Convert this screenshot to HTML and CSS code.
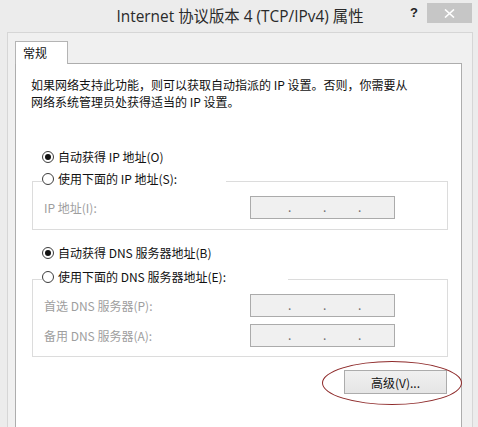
FILE: index.html
```html
<!DOCTYPE html>
<html lang="zh-CN">
<head>
<meta charset="utf-8">
<title>Internet 协议版本 4 (TCP/IPv4) 属性</title>
<link rel="stylesheet" href="styles.css">
</head>
<body>
<div class="window">
  <header class="titlebar">
    <span class="spacer"></span>
    <h1 class="title">Internet 协议版本 4 (TCP/IPv4) 属性</h1>
    <div class="controls">
      <span class="help">?</span>
      <span class="close"><svg width="11" height="9" viewBox="0 0 11 9"><path d="M1 0.5 L10 8.5 M10 0.5 L1 8.5" stroke="#fff" stroke-width="1.6" fill="none"/></svg></span>
    </div>
  </header>
  <div class="client">
    <div class="tabs"><div class="tab">常规</div></div>
    <div class="panel">
      <p class="intro">如果网络支持此功能，则可以获取自动指派的 IP 设置。否则，你需要从<br>网络系统管理员处获得适当的 IP 设置。</p>

      <div class="radio r-first"><span class="dot on"></span>自动获得 IP 地址(O)</div>
      <fieldset class="group g-ip">
        <legend class="legend lg-ip"><span class="radio"><span class="dot"></span>使用下面的 IP 地址(S):</span></legend>
        <div class="row first-row"><span class="lbl">IP 地址(I):</span><span class="ipbox"><i>.</i><i>.</i><i>.</i></span></div>
      </fieldset>

      <div class="radio r-dns"><span class="dot on"></span>自动获得 DNS 服务器地址(B)</div>
      <fieldset class="group g-dns">
        <legend class="legend lg-dns"><span class="radio"><span class="dot"></span>使用下面的 DNS 服务器地址(E):</span></legend>
        <div class="row first-row"><span class="lbl">首选 DNS 服务器(P):</span><span class="ipbox"><i>.</i><i>.</i><i>.</i></span></div>
        <div class="row next-row"><span class="lbl">备用 DNS 服务器(A):</span><span class="ipbox"><i>.</i><i>.</i><i>.</i></span></div>
      </fieldset>

      <div class="actions">
        <div class="btn-wrap">
          <button class="btn" type="button">高级(V)...</button>
          <span class="mark"></span>
        </div>
      </div>
    </div>
  </div>
</div>
</body>
</html>
```
FILE: styles.css
```css
* { box-sizing: border-box; }
html, body { margin: 0; }
body {
  width: 478px;
  height: 427px;
  overflow: hidden;
  background: #ececec;
  font-family: "Noto Sans CJK SC", "Noto Sans", sans-serif;
  font-size: 12px;
  color: #111;
}
.window { padding: 0 5px 0 7px; }

.titlebar {
  height: 32px;
  display: grid;
  grid-template-columns: 1fr auto 1fr;
}
.title {
  margin: 0;
  padding-top: 7px;
  font-family: "Open Sans", "Noto Sans CJK SC", sans-serif;
  font-weight: 400;
  font-size: 15.4px;
  line-height: 20px;
  color: #2a2a2a;
  white-space: nowrap;
}
.controls {
  justify-self: end;
  display: flex;
  align-items: flex-start;
}
.help {
  margin-top: 6px;
  margin-right: 9px;
  font-family: "Liberation Sans", sans-serif;
  font-weight: 700;
  font-size: 13px;
  line-height: 14px;
  color: #222;
}
.close {
  width: 45px;
  height: 20px;
  margin-top: 3px;
  margin-right: 1px;
  background: #c6c6c6;
  display: flex;
  align-items: center;
  justify-content: center;
}

.client {
  height: 395px;
  border: 1px solid #d6d6d6;
  border-bottom: 0;
  background: #f0f0f0;
  padding: 8px 10px 0 7px;
}
.tabs { display: flex; }
.tab {
  position: relative;
  width: 53px;
  height: 23px;
  margin-bottom: -1px;
  padding: 1px 0 0 7px;
  border: 1px solid #b4b4b4;
  border-bottom: 0;
  background: #fff;
  line-height: 19px;
  color: #111;
}
.panel {
  height: 380px;
  border: 1px solid #adadad;
  background: #fff;
  padding: 12px 13px 0 15px;
}
.intro {
  margin: 0;
  line-height: 17px;
  white-space: nowrap;
}

.radio {
  display: flex;
  align-items: center;
  height: 17px;
  line-height: 17px;
  white-space: nowrap;
  color: #111;
}
.r-first { margin: 38px 0 0 11px; }
.r-dns { margin: 14px 0 0 11px; }
.dot {
  position: relative;
  flex: none;
  width: 12px;
  height: 12px;
  margin-right: 4px;
  border: 1px solid #3c3c3c;
  border-radius: 50%;
  background: #fff;
}
.dot.on::after {
  content: "";
  position: absolute;
  left: 2px;
  top: 2px;
  width: 6px;
  height: 6px;
  border-radius: 50%;
  background: #111;
}

.group {
  min-width: 0;
  margin: 0 0 0 1px;
  padding: 0 0 10px 0;
  border: 1px solid #dcdcdc;
}
.g-ip { margin-top: 5px; }
.g-dns { margin-top: 7px; padding-bottom: 9px; }
.legend {
  margin-left: 9px;
  padding: 0 0 6px 0;
}
.lg-ip { width: 184px; }
.lg-dns { width: 246px; }

.row {
  display: grid;
  grid-template-columns: 206px 145px;
  align-items: center;
  margin-left: 11px;
}
.first-row { margin-top: 3px; }
.next-row { margin-top: 7px; }
.lbl {
  color: #9e9e9e;
  line-height: 17px;
  white-space: nowrap;
}
.ipbox {
  display: flex;
  height: 23px;
  padding-left: 37px;
  gap: 32px;
  border: 1px solid #ababab;
  background: #f0f0f0;
  line-height: 20px;
  color: #6e6e6e;
}
.ipbox i {
  font-style: normal;
  width: 3px;
}

.actions {
  display: flex;
  justify-content: flex-end;
  padding-right: 1px;
  margin-top: 13px;
}
.btn-wrap { position: relative; }
.btn {
  display: block;
  width: 103px;
  height: 24px;
  margin: 0;
  padding: 0;
  border: 1px solid #acacac;
  background: linear-gradient(#f0f0f0, #e5e5e5);
  font-family: "Noto Sans CJK SC", sans-serif;
  font-size: 12px;
  color: #111;
}
.mark {
  position: absolute;
  left: -22px;
  top: -9px;
  width: 140px;
  height: 44px;
  border: 1px solid #8e2a2a;
  border-radius: 50%;
  pointer-events: none;
}
```
